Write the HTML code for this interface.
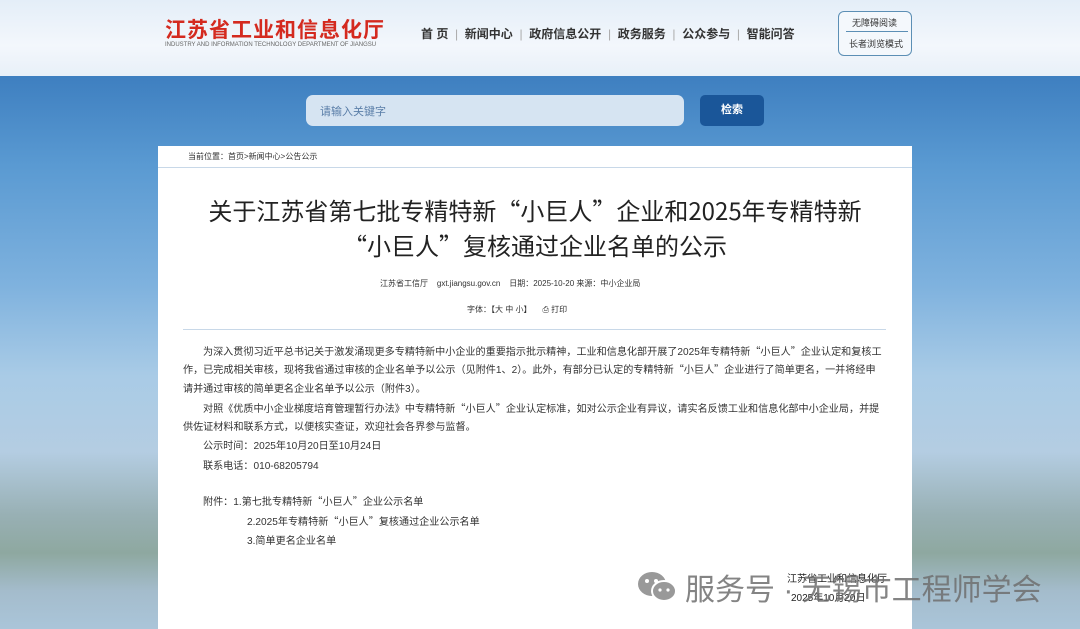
<!DOCTYPE html>
<html><head><meta charset="utf-8"><style>
*{margin:0;padding:0;box-sizing:border-box}
body{width:1080px;height:629px;overflow:hidden;position:relative;font-family:"Liberation Sans","Noto Sans CJK SC",sans-serif;background:#4f8fc8}
.hdr{position:absolute;left:0;top:0;width:1080px;height:76px;background:linear-gradient(180deg,#e4eef8 0%,#f3f7fc 60%,#e8f0f8 100%)}
.blue{position:absolute;left:0;top:76px;width:1080px;height:300px;background:linear-gradient(180deg,#3e7fc0 0%,#5a9ad2 30%,#7fb2de 70%,#a9cbe6 100%)}
.land{position:absolute;left:0;top:376px;width:1080px;height:253px;background:linear-gradient(180deg,#a9cbe6 0%,#b4cde2 30%,#98b0b4 55%,#8ea8a0 70%,#a4bccc 85%,#aac5d9 100%)}
.a{position:absolute;white-space:nowrap}
.panel{position:absolute;left:158px;top:146px;width:754px;height:483px;background:#fff}
.t{font-size:10.1px;color:#333}
.q{font-family:"Noto Sans CJK SC",sans-serif}
</style></head><body>
<div class="hdr"></div><div class="blue"></div><div class="land"></div>
<div class="a" style="left:165px;top:14px;font-size:21px;font-weight:bold;color:#d42a1f;letter-spacing:1px">江苏省工业和信息化厅</div>
<div class="a" style="left:165px;top:42px;font-size:6px;color:#666">INDUSTRY AND INFORMATION TECHNOLOGY DEPARTMENT OF JIANGSU</div>
<div class="a" style="left:421px;top:25px;font-size:12px;font-weight:bold;color:#333">首 页 <span style="color:#aaa;font-weight:normal">&nbsp;|&nbsp;</span> 新闻中心 <span style="color:#aaa;font-weight:normal">&nbsp;|&nbsp;</span> 政府信息公开 <span style="color:#aaa;font-weight:normal">&nbsp;|&nbsp;</span> 政务服务 <span style="color:#aaa;font-weight:normal">&nbsp;|&nbsp;</span> 公众参与 <span style="color:#aaa;font-weight:normal">&nbsp;|&nbsp;</span> 智能问答</div>
<div class="a" style="left:838px;top:11px;width:74px;height:45px;border:1px solid #5c8fb5;border-radius:6px;background:#f4f8fc"></div>
<div class="a" style="left:852px;top:16px;font-size:9px;color:#333">无障碍阅读</div>
<div class="a" style="left:846px;top:31px;width:62px;border-top:1px solid #5c8fb5"></div>
<div class="a" style="left:849px;top:37px;font-size:9px;color:#333">长者浏览模式</div>
<div class="a" style="left:306px;top:95px;width:378px;height:31px;border-radius:7px;background:#d6e4f2"></div>
<div class="a" style="left:320px;top:103px;font-size:11px;color:#5a7ea8">请输入关键字</div>
<div class="a" style="left:700px;top:95px;width:64px;height:31px;border-radius:5px;background:#1a5699;color:#fff;font-size:11px;font-weight:bold;text-align:center;line-height:31px">检索</div>
<div class="panel"></div>
<div class="a" style="left:188px;top:151px;font-size:8px;color:#333">当前位置：首页&gt;新闻中心&gt;公告公示</div>
<div class="a" style="left:158px;top:167px;width:754px;border-top:1px solid #c8d8e8"></div>
<div class="a q" style="left:158px;top:192px;width:754px;text-align:center;font-size:24px;color:#222;line-height:35px">关于江苏省第七批专精特新“小巨人”企业和2025年专精特新<br>“小巨人”复核通过企业名单的公示</div>
<div class="a" style="left:380px;top:278px;font-size:8px;color:#333">江苏省工信厅 &nbsp;&nbsp; gxt.jiangsu.gov.cn &nbsp;&nbsp; 日期：2025-10-20 来源：中小企业局</div>
<div class="a" style="left:467px;top:304px;font-size:8px;color:#333">字体：【大 中 小】 &nbsp;&nbsp;&nbsp; ⎙ 打印</div>
<div class="a" style="left:183px;top:329px;width:703px;border-top:1px solid #c8d8e8"></div>
<div class="a t" style="left:203px;top:343px">为深入贯彻习近平总书记关于激发涌现更多专精特新中小企业的重要指示批示精神，工业和信息化部开展了2025年专精特新<span class="q">“</span>小巨人<span class="q">”</span>企业认定和复核工</div>
<div class="a t" style="left:183px;top:361px">作，已完成相关审核，现将我省通过审核的企业名单予以公示（见附件1、2）。此外，有部分已认定的专精特新<span class="q">“</span>小巨人<span class="q">”</span>企业进行了简单更名，一并将经申</div>
<div class="a t" style="left:183px;top:380px">请并通过审核的简单更名企业名单予以公示（附件3）。</div>
<div class="a t" style="left:203px;top:400px">对照《优质中小企业梯度培育管理暂行办法》中专精特新<span class="q">“</span>小巨人<span class="q">”</span>企业认定标准，如对公示企业有异议，请实名反馈工业和信息化部中小企业局，并提</div>
<div class="a t" style="left:183px;top:418px">供佐证材料和联系方式，以便核实查证，欢迎社会各界参与监督。</div>
<div class="a t" style="left:203px;top:437px">公示时间：2025年10月20日至10月24日</div>
<div class="a t" style="left:203px;top:457px">联系电话：010-68205794</div>
<div class="a t" style="left:203px;top:493px">附件：1.第七批专精特新<span class="q">“</span>小巨人<span class="q">”</span>企业公示名单</div>
<div class="a t" style="left:247px;top:513px">2.2025年专精特新<span class="q">“</span>小巨人<span class="q">”</span>复核通过企业公示名单</div>
<div class="a t" style="left:247px;top:532px">3.简单更名企业名单</div>
<div class="a" style="left:787px;top:570px;font-size:10px;color:#222">江苏省工业和信息化厅</div>
<div class="a" style="left:791px;top:589px;font-size:10px;color:#222">2025年10月20日</div>
<svg class="a" style="left:637px;top:570px" width="42" height="34" viewBox="0 0 42 34"><ellipse cx="15" cy="14" rx="14" ry="12" fill="#999"/><ellipse cx="27" cy="21" rx="12" ry="10" fill="#999" stroke="#fff" stroke-width="2"/><circle cx="10" cy="11" r="2" fill="#fff"/><circle cx="19" cy="11" r="2" fill="#fff"/><circle cx="23" cy="20" r="1.6" fill="#fff"/><circle cx="31" cy="20" r="1.6" fill="#fff"/></svg>
<div class="a" style="left:685px;top:565px;font-size:30px;color:rgba(110,110,110,0.85)">服务号 · 无锡市工程师学会</div>
</body></html>
